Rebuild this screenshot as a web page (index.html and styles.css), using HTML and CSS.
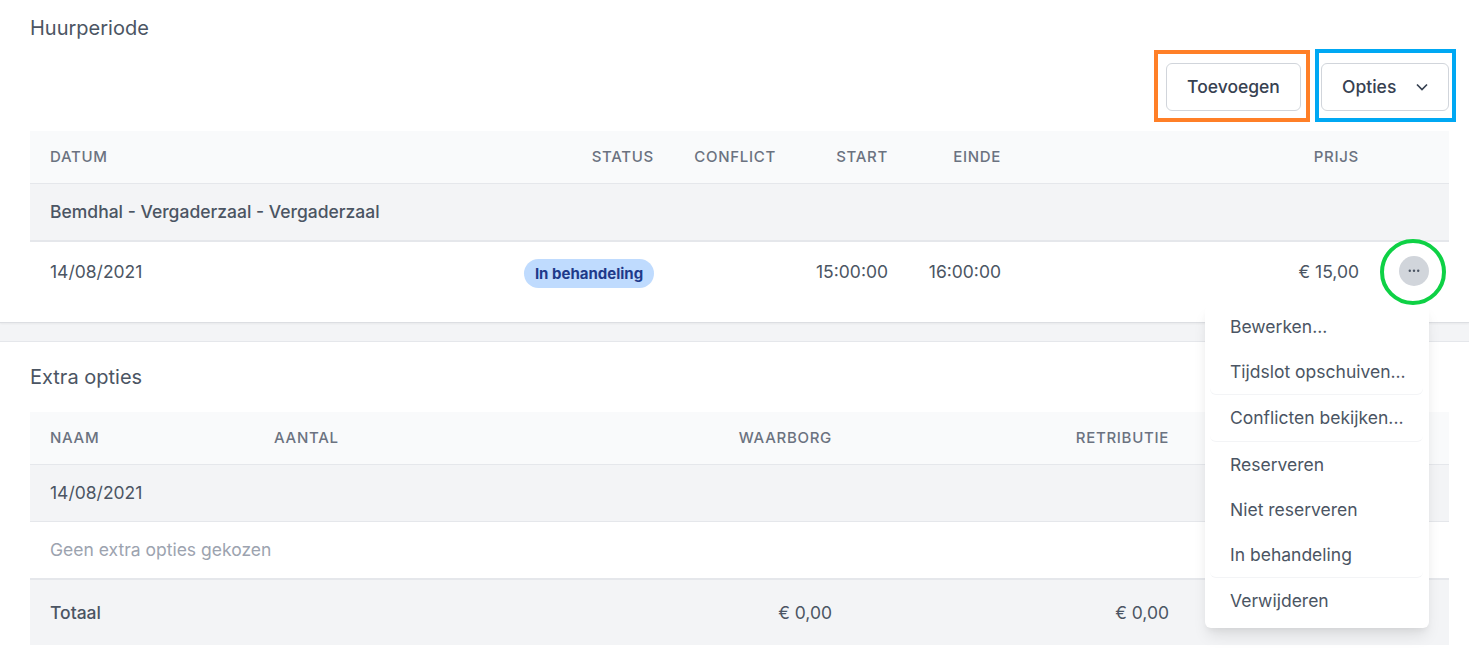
FILE: index.html
```html
<!DOCTYPE html>
<html lang="nl">
<head>
<meta charset="utf-8">
<title>Huurperiode</title>
<link rel="stylesheet" href="styles.css">
</head>
<body>
<section class="panel panel-top">
  <h2 class="title">Huurperiode</h2>
  <div class="actions">
    <button class="btn btn-add">Toevoegen</button>
    <button class="btn btn-options">Opties
      <svg class="chev" viewBox="0 0 20 20" width="20" height="20"><path d="M5 7.500 10 12.500 15 7.500" fill="none" stroke="#374151" stroke-width="1.700"/></svg>
    </button>
  </div>
  <table class="tbl tbl-a">
    <colgroup><col class="a1"><col class="a2"><col class="a3"><col class="a4"><col class="a5"><col class="a6"><col class="a7"></colgroup>
    <thead><tr><th>Datum</th><th class="r">Status</th><th class="r">Conflict</th><th class="r">Start</th><th class="r">Einde</th><th class="r">Prijs</th><th></th></tr></thead>
    <tbody>
      <tr class="group"><td colspan="7">Bemdhal - Vergaderzaal - Vergaderzaal</td></tr>
      <tr class="data">
        <td>14/08/2021</td>
        <td class="r"><span class="badge">In behandeling</span></td>
        <td></td>
        <td class="r">15:00:00</td>
        <td class="r">16:00:00</td>
        <td class="r">€ 15,00</td>
        <td><span class="dots"><svg viewBox="0 0 12 5" width="12" height="5"><circle cx="1.800" cy="1.800" r="1.200" fill="#4b5563"/><circle cx="6" cy="1.800" r="1.200" fill="#4b5563"/><circle cx="10.200" cy="1.800" r="1.200" fill="#4b5563"/></svg></span></td>
      </tr>
    </tbody>
  </table>
</section>
<section class="panel panel-bottom">
  <h2 class="title">Extra opties</h2>
  <table class="tbl tbl-b">
    <colgroup><col class="b1"><col class="b2"><col class="b3"><col class="b4"><col class="b5"></colgroup>
    <thead><tr><th>Naam</th><th>Aantal</th><th class="r">Waarborg</th><th class="r">Retributie</th><th></th></tr></thead>
    <tbody>
      <tr class="group"><td colspan="5">14/08/2021</td></tr>
      <tr class="empty"><td colspan="5">Geen extra opties gekozen</td></tr>
      <tr class="total"><td>Totaal</td><td></td><td class="r">€ 0,00</td><td class="r">€ 0,00</td><td></td></tr>
    </tbody>
  </table>
</section>

<div class="menu">
  <ul class="menu-group menu-first">
    <li>Bewerken...</li>
    <li>Tijdslot opschuiven...</li>
  </ul>
  <ul class="menu-group menu-mid">
    <li>Conflicten bekijken...</li>
  </ul>
  <ul class="menu-group">
    <li>Reserveren</li>
    <li>Niet reserveren</li>
    <li>In behandeling</li>
  </ul>
  <ul class="menu-group menu-last">
    <li>Verwijderen</li>
  </ul>
</div>
<div class="mark mark-orange"></div>
<div class="mark mark-blue"></div>
<div class="mark mark-green"></div>
</body>
</html>
```
FILE: styles.css
```css
* { box-sizing: border-box; }
html, body { margin: 0; padding: 0; }
body {
  position: relative;
  width: 1469px;
  height: 663px;
  overflow: hidden;
  background: #f3f4f6;
  font-family: Inter, "Liberation Sans", sans-serif;
  font-size: 17.500px;
  color: #4b5563;
}
.panel { padding: 0 20px 0 30px; background: #fff; }
.panel-top {
  height: 323px;
  padding-top: 16px;
  border-bottom: 1px solid #dcdee2;
  box-shadow: 0 1px 2px rgba(0,0,0,.05);
}
.panel-bottom {
  margin-top: 18px;
  height: 322px;
  padding-top: 23px;
  border-top: 1px solid #e5e7eb;
}
.title {
  margin: 0;
  font-size: 20px;
  font-weight: 400;
  line-height: 24px;
  color: #4b5563;
}
.panel-bottom .title { margin-bottom: 23px; }
.actions {
  display: flex;
  justify-content: flex-end;
  gap: 20px;
  margin-top: 7px;
  height: 84px;
  padding-top: 16px;
}
.btn {
  height: 48px;
  border: 1px solid #d1d5db;
  border-radius: 6px;
  background: #fff;
  font: 500 17.500px/24px Inter, "Liberation Sans", sans-serif;
  color: #374151;
  padding: 0;
}
.btn-add { width: 135px; }
.btn-options {
  width: 128px;
  display: flex;
  align-items: center;
  justify-content: space-between;
  padding: 0 16px 0 20px;
}
.tbl {
  width: 1419px;
  table-layout: fixed;
  border-collapse: collapse;
}
.a1 { width: 474px; } .a2 { width: 150px; } .a3 { width: 122px; } .a4 { width: 112px; }
.a5 { width: 113px; } .a6 { width: 358px; } .a7 { width: 90px; }
.b1 { width: 224px; } .b2 { width: 320px; } .b3 { width: 258px; } .b4 { width: 337px; } .b5 { width: 280px; }
th, td { padding: 0 0 0 20px; text-align: left; font-weight: 400; }
.r { text-align: right; }
th {
  height: 52px;
  background: #f9fafb;
  border-bottom: 1px solid #e5e7eb;
  font-size: 15px;
  font-weight: 500;
  letter-spacing: 0.700px;
  text-transform: uppercase;
  color: #6b7280;
}
.group td {
  background: #f3f4f6;
  color: #4b5563;
  font-weight: 500;
  border-bottom: 2px solid #e5e7eb;
}
.tbl-a .group td { height: 58px; }
.tbl-a .data td { height: 81px; padding-bottom: 22px; background: #fff; }
.tbl-a .data td:nth-child(2) { padding-bottom: 17px; }
.tbl-b .group td { height: 57px; font-weight: 400; border-bottom-width: 1px; }
.empty td { height: 58px; color: #9ca3af; border-bottom: 2px solid #e5e7eb; }
.total td { height: 66px; background: #f3f4f6; }
.total td:first-child { font-weight: 500; }
.badge {
  display: inline-block;
  width: 130px;
  height: 29px;
  border-radius: 15px;
  background: #bfdbfe;
  color: #1e3a8a;
  font-size: 15px;
  font-weight: 700;
  line-height: 29px;
  text-align: center;
  vertical-align: middle;
}
.dots {
  display: flex;
  align-items: center;
  justify-content: center;
  width: 30px;
  height: 30px;
  margin-left: 20px;
  border-radius: 50%;
  background: #d1d5db;
}
.menu {
  position: absolute;
  left: 1205px;
  top: 305px;
  width: 224px;
  padding: 0 6px 0 5px;
  background: #fff;
  border-radius: 6px;
  box-shadow: 0 10px 15px -3px rgba(0,0,0,.1), 0 4px 6px -2px rgba(0,0,0,.05);
}
.menu-group {
  margin: 0;
  padding: 0;
  list-style: none;
  border-bottom: 1px solid #f3f4f6;
  border-radius: 0 0 6px 6px;
}
.menu-first { border-bottom-width: 0; box-shadow: 0 -1px 0 #f3f4f6 inset; }
.menu .menu-first li { line-height: 43px; }
.menu-mid { padding-top: 1px; }
.menu .menu-mid li { line-height: 43px; }
.menu-last { border-bottom: 0; padding-bottom: 5px; }
.menu li {
  height: 45px;
  padding-left: 20px;
  line-height: 45px;
  color: #4b5563;
  white-space: nowrap;
}
.mark { position: absolute; pointer-events: none; }
.mark-orange { left: 1154px; top: 50px; width: 156px; height: 72px; border: 4px solid #ff7f27; }
.mark-blue { left: 1315px; top: 49px; width: 141px; height: 73px; border: 4px solid #00a8f3; }
.mark-green { left: 1380px; top: 239px; width: 66px; height: 66px; border: 4px solid #0ed145; border-radius: 50%; }
```
